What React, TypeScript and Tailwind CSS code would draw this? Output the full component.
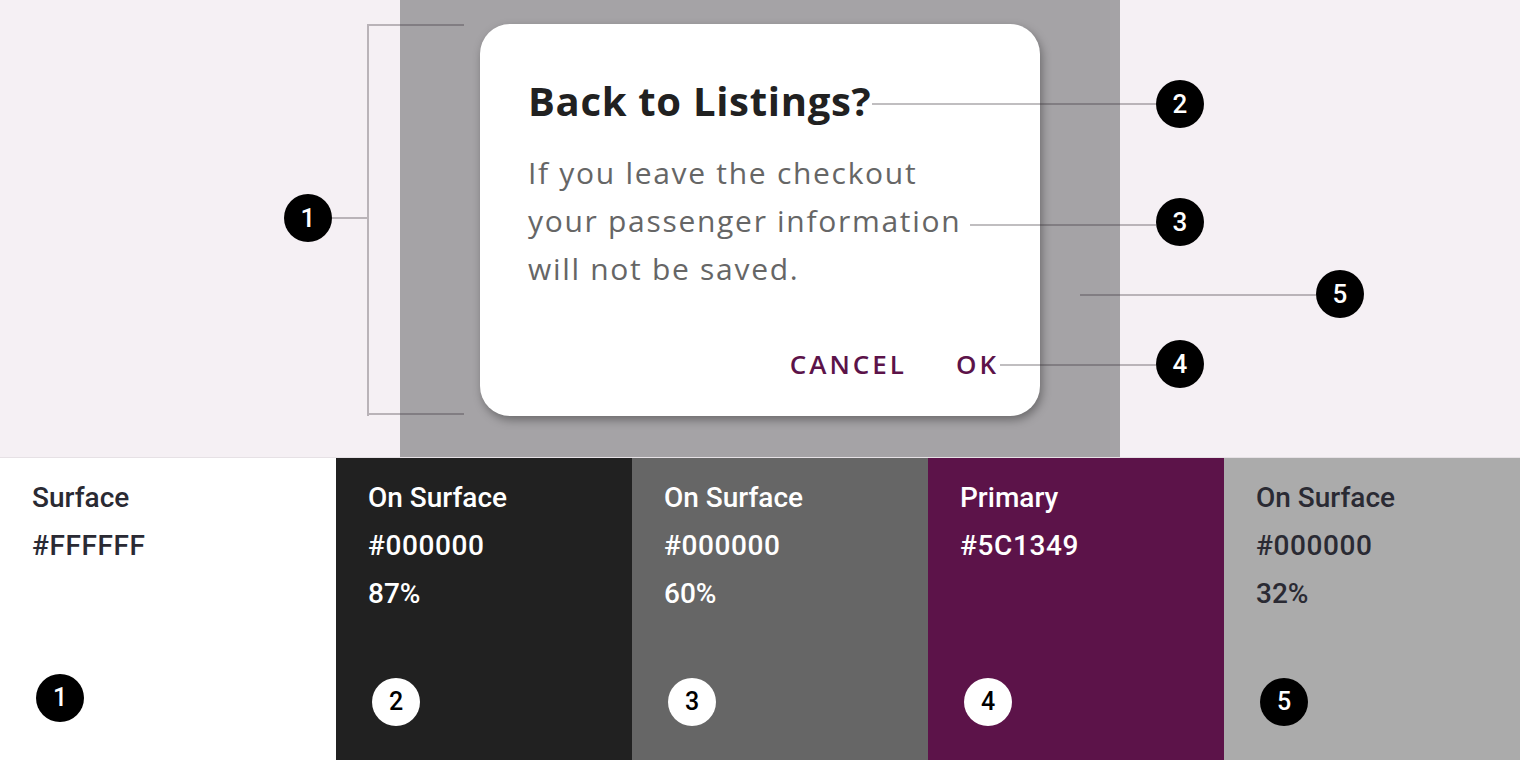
import React from "react";

const Marker = ({ n, className }: { n: number; className: string }) => (
  <div
    className={`absolute flex h-12 w-12 items-center justify-center rounded-full bg-black text-[26px] font-medium text-white font-['Roboto',sans-serif] ${className}`}
  >
    {n}
  </div>
);

const Line = ({ className }: { className: string }) => (
  <div className={`absolute bg-[rgba(48,40,46,0.3)] ${className}`} />
);

type Swatch = {
  name: string;
  hex: string;
  pct?: string;
  bg: string;
  text: string;
  badge: string;
  width: string;
  badgeOffset: string;
  n: number;
};

const swatches: Swatch[] = [
  { name: "Surface", hex: "#FFFFFF", bg: "bg-white", text: "text-[#2a2a33]", badge: "bg-black text-white", width: "w-[336px]", badgeOffset: "mb-[38px]", n: 1 },
  { name: "On Surface", hex: "#000000", pct: "87%", bg: "bg-[#212121]", text: "text-white", badge: "bg-white text-black", width: "w-[296px]", badgeOffset: "mb-[34px]", n: 2 },
  { name: "On Surface", hex: "#000000", pct: "60%", bg: "bg-[#666666]", text: "text-white", badge: "bg-white text-black", width: "w-[296px]", badgeOffset: "mb-[34px]", n: 3 },
  { name: "Primary", hex: "#5C1349", bg: "bg-[#5c1349]", text: "text-white", badge: "bg-white text-black", width: "w-[296px]", badgeOffset: "mb-[34px]", n: 4 },
  { name: "On Surface", hex: "#000000", pct: "32%", bg: "bg-[#ababab]", text: "text-[#2a2a33]", badge: "bg-black text-white", width: "flex-1", badgeOffset: "mb-[34px]", n: 5 },
];

export default function App() {
  return (
    <div className="flex h-[760px] w-[1520px] flex-col overflow-hidden bg-white">
      {/* dialog diagram */}
      <section className="relative flex h-[458px] border-b border-[#e6e1e5]">
        <div className="w-[400px] bg-[#f5f0f4]" />
        <div className="w-[720px] bg-[#a5a3a6] pl-20 pt-6">
          <div className="flex h-[392px] w-[560px] flex-col rounded-[30px] bg-white pb-7 pl-12 pr-[41px] pt-[53px] shadow-[2px_4px_10px_rgba(0,0,0,0.35)] font-['Open_Sans',sans-serif]">
            <h2 className="text-[40px] font-bold leading-[48px] tracking-[0.7px] text-[#212121]">
              Back to Listings?
            </h2>
            <p className="mt-6 text-[30px] leading-[48px] tracking-[1.7px] text-[#666666]">
              If you leave the checkout
              <br />
              your passenger information
              <br />
              will not be saved.
            </p>
            <div className="mt-auto flex h-12 items-center justify-end gap-[49px] text-[26px] font-semibold tracking-[3px] text-[#5c1349]">
              <span>CANCEL</span>
              <span>OK</span>
            </div>
          </div>
        </div>
        <div className="flex-1 bg-[#f5f0f4]" />

        {/* bracket for 1 */}
        <Line className="left-[367px] top-6 h-[392px] w-[2px]" />
        <Line className="left-[369px] top-6 h-[2px] w-[95px]" />
        <Line className="left-[369px] top-[413px] h-[2px] w-[95px]" />
        <Line className="left-[332px] top-[217px] h-[2px] w-[35px]" />
        <Marker n={1} className="left-[284px] top-[194px]" />

        {/* leader lines */}
        <Line className="left-[872px] top-[103px] h-[2px] w-[284px]" />
        <Line className="left-[970px] top-[224px] h-[2px] w-[186px]" />
        <Line className="left-[1080px] top-[294px] h-[2px] w-[236px]" />
        <Line className="left-[1000px] top-[364px] h-[2px] w-[156px]" />
        <Marker n={2} className="left-[1156px] top-[80px]" />
        <Marker n={3} className="left-[1156px] top-[198px]" />
        <Marker n={5} className="left-[1316px] top-[270px]" />
        <Marker n={4} className="left-[1156px] top-[340px]" />
      </section>

      {/* colour swatches */}
      <section className="flex flex-1">
        {swatches.map((s) => (
          <div
            key={s.n}
            className={`flex flex-col pl-8 pt-4 font-['Roboto',sans-serif] ${s.width} ${s.bg} ${s.text}`}
          >
            <div className="text-[28px] font-medium leading-[48px]">{s.name}</div>
            <div className="text-[28px] font-medium leading-[48px] tracking-[0.6px]">{s.hex}</div>
            {s.pct && <div className="text-[28px] font-medium leading-[48px]">{s.pct}</div>}
            <div
              className={`ml-1 mt-auto flex h-12 w-12 items-center justify-center rounded-full text-[25px] font-medium ${s.badge} ${s.badgeOffset}`}
            >
              {s.n}
            </div>
          </div>
        ))}
      </section>
    </div>
  );
}
